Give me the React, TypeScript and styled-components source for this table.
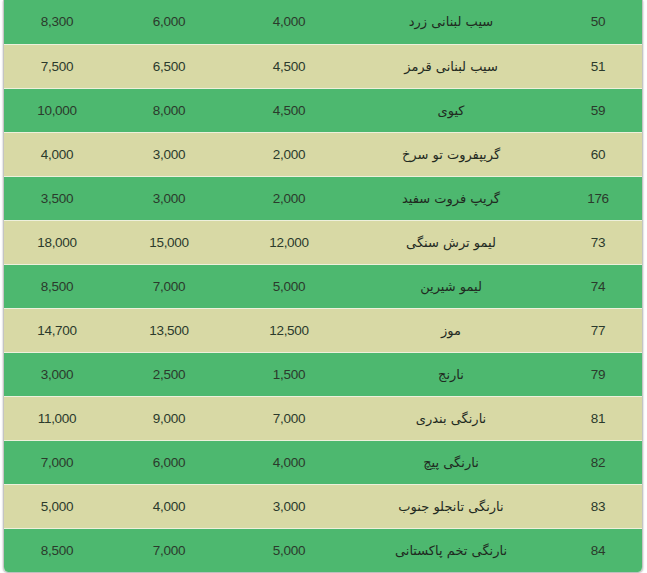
import React from "react";
import styled, { createGlobalStyle } from "styled-components";

const GlobalStyle = createGlobalStyle`
  html, body {
    margin: 0;
    padding: 0;
    background: #ffffff;
  }
  body {
    font-family: "Liberation Sans", "DejaVu Sans", sans-serif;
  }
`;

const rows = [
  ["50", "سیب لبنانی زرد", "4,000", "6,000", "8,300"],
  ["51", "سیب لبنانی قرمز", "4,500", "6,500", "7,500"],
  ["59", "کیوی", "4,500", "8,000", "10,000"],
  ["60", "گریپفروت تو سرخ", "2,000", "3,000", "4,000"],
  ["176", "گریپ فروت سفید", "2,000", "3,000", "3,500"],
  ["73", "لیمو ترش سنگی", "12,000", "15,000", "18,000"],
  ["74", "لیمو شیرین", "5,000", "7,000", "8,500"],
  ["77", "موز", "12,500", "13,500", "14,700"],
  ["79", "نارنج", "1,500", "2,500", "3,000"],
  ["81", "نارنگی بندری", "7,000", "9,000", "11,000"],
  ["82", "نارنگی پیچ", "4,000", "6,000", "7,000"],
  ["83", "نارنگی تانجلو جنوب", "3,000", "4,000", "5,000"],
  ["84", "نارنگی تخم پاکستانی", "5,000", "7,000", "8,500"],
];

const widths = [92, 202, 122, 118, 106];

export default function App() {
  return (
    <>
      <GlobalStyle />
      <Page>
        <Card>
          <PriceTable dir="rtl">
            <colgroup>
              {widths.map((w, i) => (
                <col key={i} style={{ width: w }} />
              ))}
            </colgroup>
            <tbody>
              {rows.map((r, i) => (
                <Row key={r[0]} $green={i % 2 === 0} $first={i === 0}>
                  <Cell>{r[0]}</Cell>
                  <NameCell>{r[1]}</NameCell>
                  <Cell>{r[2]}</Cell>
                  <Cell>{r[3]}</Cell>
                  <Cell>{r[4]}</Cell>
                </Row>
              ))}
            </tbody>
          </PriceTable>
        </Card>
      </Page>
    </>
  );
}

const Page = styled.div`
  padding: 0 4px 1px 3px;
`;

const Card = styled.div`
  width: 640px;
  border-left: 1px solid #c4c4c4;
  border-right: 1px solid #c4c4c4;
  border-radius: 0 0 5px 5px;
  overflow: hidden;
  box-shadow: 0 1px 2px rgba(0, 0, 0, 0.35);
  box-sizing: border-box;
`;

const PriceTable = styled.table`
  width: 100%;
  border-collapse: collapse;
  table-layout: fixed;
`;

const Row = styled.tr<{ $green: boolean; $first: boolean }>`
  height: 44px;
  background: ${(p) => (p.$green ? "#4db86f" : "#d8d9a5")};
  border-top: ${(p) => (p.$first ? "none" : "1px solid #eef0dc")};
`;

const Cell = styled.td`
  text-align: center;
  vertical-align: middle;
  padding: 0;
  font-size: 13.5px;
  color: #2b3a2c;
  letter-spacing: -0.3px;
`;

const NameCell = styled(Cell)`
  font-family: "DejaVu Sans", sans-serif;
  font-size: 13px;
  color: #1f2a1f;
  letter-spacing: 0;
`;
